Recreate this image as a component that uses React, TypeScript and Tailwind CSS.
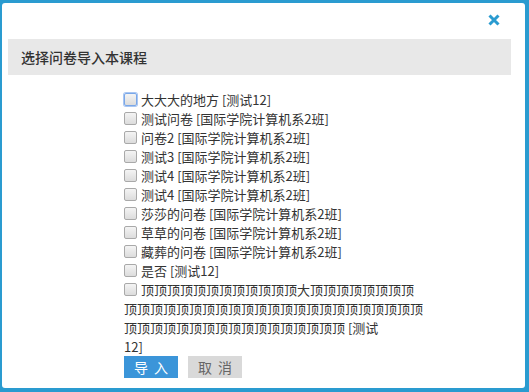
import React from "react";

const items: { name: string; cls: React.ReactNode }[] = [
  { name: "大大大的地方", cls: "测试12" },
  { name: "测试问卷", cls: "国际学院计算机系2班" },
  { name: "问卷2", cls: "国际学院计算机系2班" },
  { name: "测试3", cls: "国际学院计算机系2班" },
  { name: "测试4", cls: "国际学院计算机系2班" },
  { name: "测试4", cls: "国际学院计算机系2班" },
  { name: "莎莎的问卷", cls: "国际学院计算机系2班" },
  { name: "草草的问卷", cls: "国际学院计算机系2班" },
  { name: "藏葬的问卷", cls: "国际学院计算机系2班" },
  { name: "是否", cls: "测试12" },
  {
    name: "顶顶顶顶顶顶顶顶顶顶顶顶大顶顶顶顶顶顶顶顶顶顶顶顶顶顶顶顶顶顶顶顶顶顶顶顶顶顶顶顶顶顶顶顶顶顶顶顶顶顶顶顶顶顶顶顶顶顶顶顶",
    cls: (
      <>
        测试
        <br />
        12
      </>
    ),
  },
];

function Box({ focused }: { focused?: boolean }) {
  return (
    <span
      className={
        "inline-block align-middle w-[13px] h-[13px] rounded-[2px] border bg-gradient-to-b from-[#f4f4f4] to-[#dcdcdc] mr-[4px] -mt-[3px] " +
        (focused ? "border-[#7aa7e8] shadow-[0_0_0_1px_#a9c6f2]" : "border-[#a9a9a9]")
      }
    />
  );
}

export default function App() {
  return (
    <div
      className="w-[529px] h-[392px] bg-[#2a9bd0] pt-[3px] pl-[2px] pr-[4px] pb-[4px]"
      style={{ fontFamily: '"Microsoft YaHei", "Noto Sans CJK SC", "Noto Sans", sans-serif' }}
    >
      <div className="bg-white h-full rounded-[3px] flex flex-col">
        <div className="flex justify-end pt-[11px] pr-[25px] h-[36px]">
          <svg width="12" height="12" viewBox="0 0 12 12">
            <path d="M1.5 1.5 L10.5 10.5 M10.5 1.5 L1.5 10.5" stroke="#2a9bd0" strokeWidth="3" strokeLinecap="butt" />
          </svg>
        </div>
        <div className="ml-[6px] mr-[14px] h-[36px] bg-[#e8e8e8] flex items-center pl-[13px] text-[14px] text-[#333] font-medium">
          选择问卷导入本课程
        </div>
        <div className="ml-[122px] mt-[15px] w-[302px] text-[13px] leading-[19px] text-[#333]">
          {items.map((it, i) => (
            <div key={i}>
              <Box focused={i === 0} />
              {it.name} [{it.cls}]
            </div>
          ))}
          <div className="flex gap-[10px]">
            <button className="w-[54px] h-[22px] bg-[#3b95d9] text-white text-[14px] tracking-[6px] pl-[6px] leading-[22px]">
              导入
            </button>
            <button className="w-[54px] h-[22px] bg-[#d9d9d9] text-[#666] text-[14px] tracking-[6px] pl-[6px] leading-[22px]">
              取消
            </button>
          </div>
        </div>
      </div>
    </div>
  );
}
